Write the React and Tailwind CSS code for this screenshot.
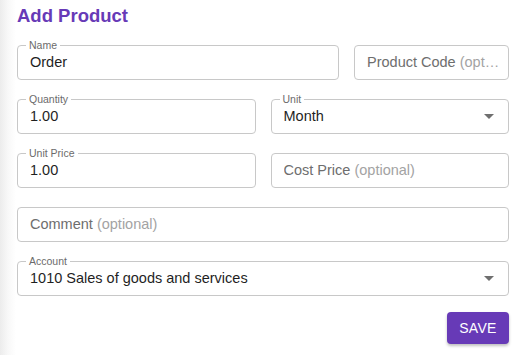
import React from 'react';

function Field({ label, value, placeholder, hint, select, className = '' }) {
  return (
    <div className={`relative flex h-[35px] min-w-0 items-center rounded-[4px] border border-[#c8c8c8] bg-white pl-[12px] pr-[14px] ${className}`}>
      {label && (
        <span className="absolute -top-[7px] left-[8px] bg-white px-[3px] text-[10.5px] leading-[12px] text-[#6b6b6b]">
          {label}
        </span>
      )}
      {value ? (
        <span className="min-w-0 flex-1 truncate pt-[1px] text-[14.5px] text-[#1f1f1f]">{value}</span>
      ) : (
        <span className="min-w-0 flex-1 overflow-hidden whitespace-nowrap text-[14.5px] text-[#6e6e6e]">
          {placeholder}
          {hint && <span className="text-[#a3a3a3]"> {hint}</span>}
        </span>
      )}
      {select && (
        <svg width="10" height="5" viewBox="0 0 10 5" className="ml-2 shrink-0 text-[#6f6f6f]">
          <path d="M0 0h10L5 5z" fill="currentColor" />
        </svg>
      )}
    </div>
  );
}

export default function App() {
  return (
    <div className="h-[355px] w-[522px] bg-[linear-gradient(to_right,#ececec_0px,#f8f8f8_8px,#ffffff_16px)] font-['Liberation_Sans',Arial,sans-serif]">
      <div className="flex flex-col pl-[17px] pr-[13px] pt-[5px]">
        <h1 className="text-[18.5px] font-bold leading-[22px] text-[#673ab7]">Add Product</h1>
        <div className="mt-[18px] flex flex-col gap-[19px]">
          <div className="flex gap-[15px]">
            <Field label="Name" value="Order" className="w-[322px] shrink-0" />
            <Field placeholder="Product Code" hint="(opt…" className="flex-1 !pr-[4px]" />
          </div>
          <div className="flex gap-[15px]">
            <Field label="Quantity" value="1.00" className="flex-1" />
            <Field label="Unit" value="Month" select className="flex-1" />
          </div>
          <div className="flex gap-[15px]">
            <Field label="Unit Price" value="1.00" className="flex-1" />
            <Field placeholder="Cost Price" hint="(optional)" className="flex-1" />
          </div>
          <Field placeholder="Comment" hint="(optional)" />
          <Field label="Account" value="1010 Sales of goods and services" select />
        </div>
        <div className="mt-[16px] flex justify-end">
          <button className="h-[32px] w-[62px] rounded-[4px] bg-[#673ab7] text-[14px] font-medium tracking-[0.3px] text-white shadow-[0_2px_3px_rgba(0,0,0,0.25)]">
            SAVE
          </button>
        </div>
      </div>
    </div>
  );
}
